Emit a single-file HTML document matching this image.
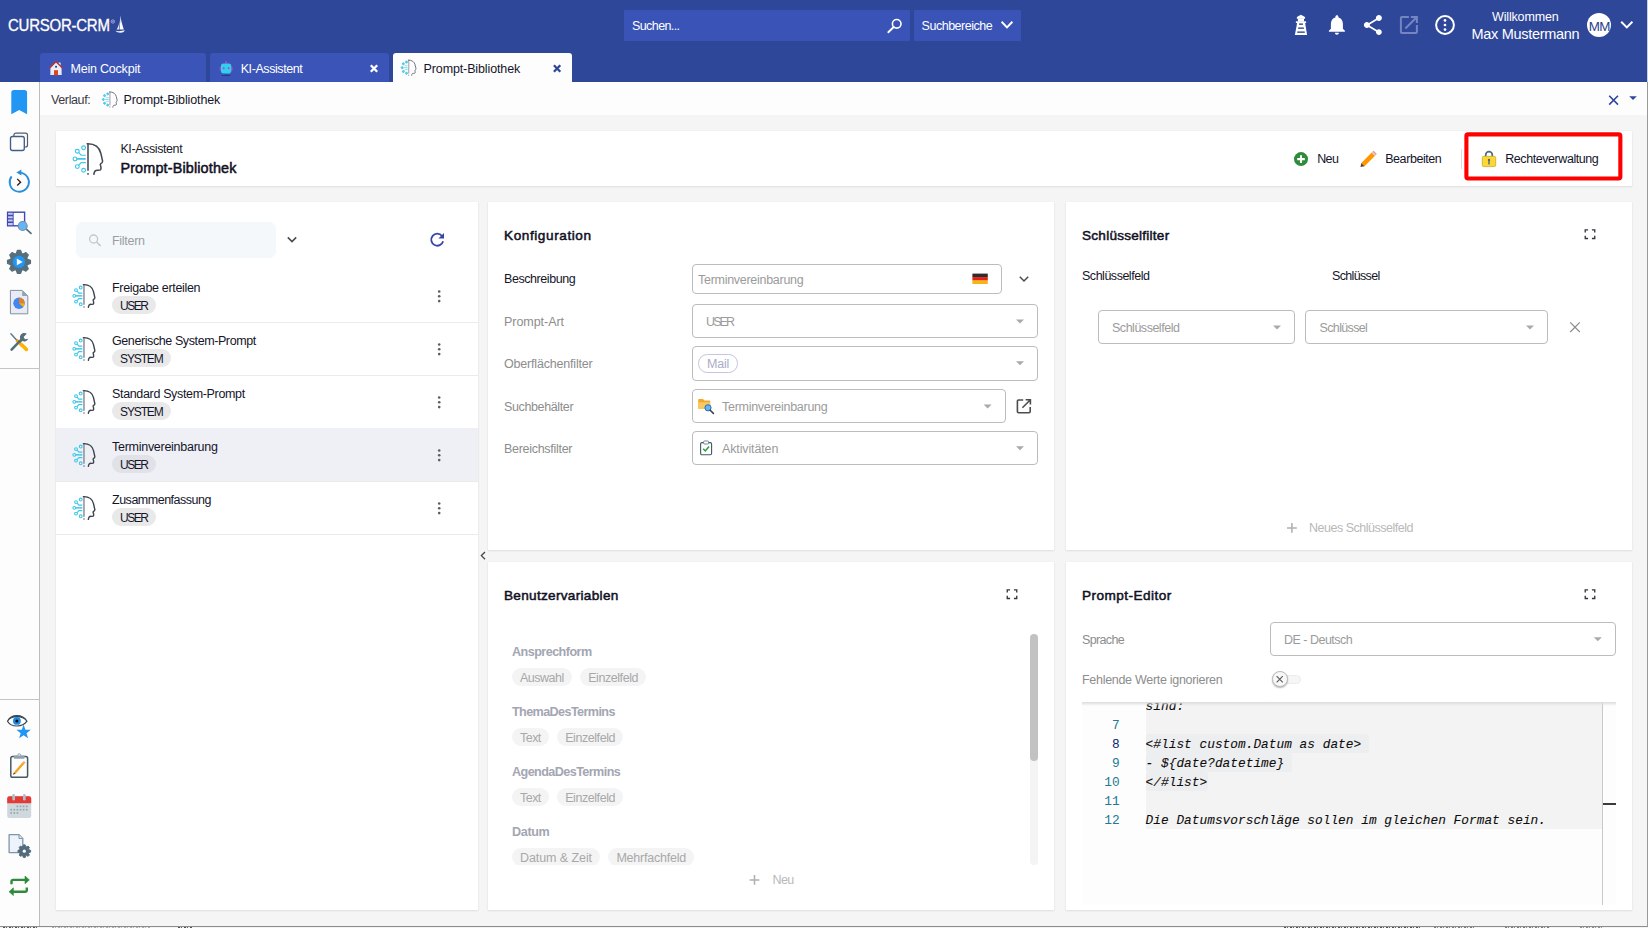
<!DOCTYPE html>
<html lang="de">
<head>
<meta charset="utf-8">
<title>CURSOR-CRM – Prompt-Bibliothek</title>
<style>
*{box-sizing:border-box;margin:0;padding:0}
html,body{width:1648px;height:928px;overflow:hidden;background:#f5f5f5;font-family:"Liberation Sans",sans-serif;font-size:12.5px;color:#1b1b2b}
.abs{position:absolute}
.t{position:absolute;white-space:nowrap;line-height:1}
svg{overflow:visible}
#hdr{left:0;top:0;width:1648px;height:82px;background:#2f4799}
#side{left:0;top:82px;width:40px;height:845px;background:#fdfdfd;border-right:1px solid #bdbdbd}
#crumb{left:40px;top:82px;width:1608px;height:33px;background:#fdfdfd}
</style>
</head>
<body>
<div id="hdr" class="abs"></div>
<div id="side" class="abs"></div>
<div id="crumb" class="abs"></div>
<div class="t" style="left:8.30px;top:16.00px;font-size:16.20px;color:#fff;letter-spacing:-0.290px;line-height:18px;-webkit-text-stroke:.3px #fff;transform:scaleX(.928);transform-origin:0 0;">CURSOR-CRM</div>
<svg class="abs" style="left:110px;top:19px;" width="4.60" height="4.60" viewBox="-1.304 -0.435 10.000 10.000"><circle cx="5" cy="5" r="3.6" fill="none" stroke="#dfe4f5" stroke-width="1.3"/><circle cx="5" cy="5" r="1.2" fill="#dfe4f5"/></svg>
<svg class="abs" style="left:115px;top:15px;" width="10.00" height="18.30" viewBox="0.000 0.000 21.000 37.000"><path d="M11 0 C12 9 15.5 20 18.5 30 H9.5 C11 20 11.2 9 11 0Z" fill="#fff"/><path d="M9.6 9 C9.2 17 7.5 24 3.5 30 H8.4 C9.6 23 9.9 16 9.6 9Z" fill="#e4e9f8"/><path d="M1 32.5 C6 33.6 14 33.4 20.5 31.5 C19.5 34.5 17 36.2 12 36.4 C7 36.5 3 35.4 1 32.5Z" fill="#f2f4fc"/></svg>
<div class="abs" style="left:624.00px;top:10.00px;width:286.00px;height:30.50px;background:#3953b6;border-radius:1px;"></div>
<div class="t" style="left:632.00px;top:19.00px;font-size:12.50px;color:#fff;letter-spacing:-0.590px;line-height:14px;">Suchen...</div>
<svg class="abs" style="left:886px;top:17px;" width="17.00" height="16.00" viewBox="-0.500 -0.600 17.000 16.000"><circle cx="10.2" cy="6.2" r="4.3" fill="none" stroke="#fff" stroke-width="1.6"/><path d="M7.2 9.4 L1.8 14.6" stroke="#fff" stroke-width="1.9" stroke-linecap="round"/></svg>
<div class="abs" style="left:914.00px;top:10.00px;width:107.00px;height:30.50px;background:#3953b6;border-radius:1px;"></div>
<div class="t" style="left:921.60px;top:19.00px;font-size:12.50px;color:#fff;letter-spacing:-0.487px;line-height:14px;">Suchbereiche</div>
<svg class="abs" style="left:1000px;top:20px;" width="14.00" height="10.00" viewBox="0.000 0.000 14.000 10.000"><path d="M1.6 1.8 L7 7.4 L12.4 1.8" fill="none" stroke="#fff" stroke-width="2"/></svg>
<svg class="abs" style="left:1294px;top:14px;" width="14.00" height="20.40" viewBox="0.000 -0.800 14.000 20.400"><g fill="#fff"><path d="M6.9 0 L10.6 1.9 Q11.1 2.2 11.1 2.8 V3.4 Q11.1 4 10.5 4 H3.4 Q2.8 4 2.8 3.4 V2.8 Q2.8 2.2 3.3 1.9Z"/><rect x="3.9" y="3.6" width="6.1" height="3.2"/><rect x="1.8" y="6.4" width="10.4" height="1.9" rx=".7"/><path d="M3.2 8 H11.1 L13.1 20.3 H0.9Z"/></g><g fill="#1f2f86"><rect x="5" y="8.6" width="4" height="1.4" rx=".3"/><rect x="4.1" y="12.6" width="5.8" height="1.4" rx=".3"/><rect x="3.2" y="16.6" width="7.6" height="1.4" rx=".3"/></g></svg>
<svg class="abs" style="left:1324px;top:12px;" width="24.00" height="24.00" viewBox="-0.900 -0.700 24.000 24.000"><path fill="#fff" d="M12 22c1.1 0 2-.9 2-2h-4c0 1.1.89 2 2 2zm6-6v-5c0-3.07-1.64-5.64-4.5-6.32V4c0-.83-.67-1.5-1.5-1.5s-1.5.67-1.5 1.5v.68C7.63 5.36 6 7.92 6 11v5l-2 2v1h16v-1l-2-2z"/></svg>
<svg class="abs" style="left:1360px;top:13px;" width="24.00" height="24.00" viewBox="-0.900 -0.100 24.000 24.000"><path fill="#fff" d="M18 16.08c-.76 0-1.44.3-1.96.77L8.91 12.7c.05-.23.09-.46.09-.7s-.04-.47-.09-.7l7.05-4.11c.54.5 1.25.81 2.04.81 1.66 0 3-1.34 3-3s-1.34-3-3-3-3 1.34-3 3c0 .24.04.47.09.7L8.04 9.81C7.5 9.31 6.79 9 6 9c-1.66 0-3 1.34-3 3s1.34 3 3 3c.79 0 1.5-.31 2.04-.81l7.12 4.16c-.05.21-.08.43-.08.65 0 1.61 1.31 2.92 2.92 2.92 1.61 0 2.92-1.31 2.92-2.92s-1.31-2.92-2.92-2.92z"/></svg>
<svg class="abs" style="left:1396px;top:13px;" width="24.00" height="24.00" viewBox="-0.900 0.000 24.000 24.000"><path fill="#7584c2" d="M19 19H5V5h7V3H5c-1.11 0-2 .9-2 2v14c0 1.1.89 2 2 2h14c1.1 0 2-.9 2-2v-7h-2v7zM14 3v2h3.59l-9.83 9.83 1.41 1.41L19 6.41V10h2V3h-7z"/></svg>
<svg class="abs" style="left:1433px;top:13px;" width="24.00" height="24.00" viewBox="0.000 0.000 24.000 24.000"><circle cx="12" cy="12" r="8.9" fill="none" stroke="#fff" stroke-width="2"/><circle cx="12" cy="7.4" r="1.35" fill="#fff"/><circle cx="12" cy="12" r="1.35" fill="#fff"/><circle cx="12" cy="16.6" r="1.35" fill="#fff"/></svg>
<div class="t" style="left:1492.00px;top:10.00px;font-size:12.50px;color:#fff;letter-spacing:-0.156px;line-height:14px;">Willkommen</div>
<div class="t" style="left:1471.40px;top:26.00px;font-size:14.50px;color:#fff;letter-spacing:-0.286px;line-height:16px;">Max Mustermann</div>
<div class="abs" style="left:1586.60px;top:13.00px;width:24.40px;height:24.40px;background:#fff;border-radius:50%;"></div>
<div class="t" style="left:1588.80px;top:19.00px;font-size:13.40px;color:#2b3f8c;letter-spacing:-0.654px;line-height:15px;">MM</div>
<svg class="abs" style="left:1619px;top:20px;" width="14.50" height="10.00" viewBox="-0.600 0.000 14.500 10.000"><path d="M1.6 1.8 L7.2 7.4 L12.8 1.8" fill="none" stroke="#fff" stroke-width="2"/></svg>
<div class="abs" style="left:40.00px;top:53.00px;width:166.00px;height:29.00px;background:#3a55b7;border-radius:3px 3px 0 0;"></div>
<svg class="abs" style="left:49px;top:60px;" width="14.00" height="15.00" viewBox="0.000 -0.600 14.000 15.000"><rect x="9.4" y="2" width="2.2" height="4" fill="#e9ebf6"/><path d="M1.4 7.2 L7 1.8 L12.6 7.2 V14.4 H1.4Z" fill="#ededf9"/><rect x="1.4" y="12.9" width="11.2" height="0.8" fill="#d9dbf0"/><path d="M0.4 7.6 L7 0.9 L13.6 7.6" fill="none" stroke="#b23b3a" stroke-width="1.5" stroke-linejoin="miter"/><rect x="5" y="9.6" width="4" height="4.9" fill="#e2470f"/><rect x="6.1" y="5.3" width="1.9" height="1.7" fill="#0d4e8c"/></svg>
<div class="t" style="left:70.60px;top:62.00px;font-size:12.50px;color:#fff;letter-spacing:-0.221px;line-height:14px;">Mein Cockpit</div>
<div class="abs" style="left:210.00px;top:53.00px;width:179.00px;height:29.00px;background:#3a55b7;border-radius:3px 3px 0 0;"></div>
<svg class="abs" style="left:219px;top:60px;" width="15.00" height="16.00" viewBox="0.000 -0.600 15.000 16.000"><rect x="6.1" y="0.4" width="1.9" height="2.6" rx=".5" fill="#b43fc6"/><rect x="0.4" y="6.2" width="2" height="4" rx="1" fill="#a53fc0"/><rect x="11.8" y="6.2" width="2" height="4" rx="1" fill="#a53fc0"/><rect x="1.9" y="3" width="10.4" height="9.8" rx="2.6" fill="#30d0ee"/><path d="M9 12.8 H10 C11.5 12.8 12.3 11.8 12.3 10.4 V9.5 C11.8 11.5 10.7 12.5 9 12.8Z" fill="#27b7c8"/><circle cx="4.7" cy="7.6" r=".95" fill="#c038c9"/><circle cx="9.7" cy="7.6" r=".95" fill="#c038c9"/><ellipse cx="7.1" cy="14.8" rx="4.8" ry=".55" fill="#243a86"/></svg>
<div class="t" style="left:240.70px;top:62.00px;font-size:12.50px;color:#fff;letter-spacing:-0.424px;line-height:14px;">KI-Assistent</div>
<svg class="abs" style="left:369px;top:64px;" width="9.00" height="9.00" viewBox="-0.500 0.000 9.000 9.000"><path d="M1.3 1.3 L7.7 7.7 M7.7 1.3 L1.3 7.7" stroke="#fff" stroke-width="2.3"/></svg>
<div class="abs" style="left:393.00px;top:53.00px;width:179.00px;height:29.00px;background:#fdfdfd;border-radius:3px 3px 0 0;"></div>
<svg class="abs" style="left:396px;top:56px;" width="24.00" height="23.00" viewBox="-1.400 -0.400 48.000 46.000"><g fill="#5fd3ef" stroke="#3cc6e9" stroke-width="2.0"><circle cx="19.6" cy="11.7" r="1.9"/><circle cx="13.3" cy="15.2" r="1.9"/><circle cx="11" cy="22.9" r="1.9"/><circle cx="13.3" cy="30.6" r="1.9"/><circle cx="19.6" cy="34.2" r="1.9"/></g><path d="M14.7 16.6 L17.2 19.2 H21.8 M14.7 29.2 L17.2 26.6 H21.8" fill="none" stroke="#8fe0f4" stroke-width="2.0"/><path d="M13 22.9 H21.8" stroke="#8fe0f4" stroke-width="2.4"/><path d="M24 7.3 V34.7" stroke="#b4b5b9" stroke-width="2.6" fill="none"/><rect x="23.1" y="37" width="1.8" height="1.8" fill="#6a6f79"/><path d="M23.2 7.8 C30.5 7.6 35.3 11.2 36.8 17.2 L38.6 25.2 C38.8 26.3 38.2 27 36.6 27.9 C36 28.4 36.3 29.3 36.7 30 C37.1 31 37 32.2 36.9 33.3 C36.8 34.4 35.5 34.4 34 34.3 C31.2 34 30.2 35.4 29.9 38.3" stroke="#5b606a" stroke-width="1.7" fill="none" stroke-linecap="round" stroke-linejoin="round"/></svg>
<div class="t" style="left:423.60px;top:62.00px;font-size:12.50px;color:#15152a;letter-spacing:-0.127px;line-height:14px;">Prompt-Bibliothek</div>
<svg class="abs" style="left:552px;top:64px;" width="9.00" height="9.00" viewBox="-0.600 0.000 9.000 9.000"><path d="M1.3 1.3 L7.7 7.7 M7.7 1.3 L1.3 7.7" stroke="#2f4799" stroke-width="2.3"/></svg>
<div class="t" style="left:51.00px;top:93.00px;font-size:12.50px;color:#3a3a45;letter-spacing:-0.374px;line-height:14px;">Verlauf:</div>
<svg class="abs" style="left:97px;top:88px;" width="24.00" height="23.00" viewBox="-1.800 0.000 48.000 46.000"><g fill="#5fd3ef" stroke="#3cc6e9" stroke-width="2.0"><circle cx="19.6" cy="11.7" r="1.9"/><circle cx="13.3" cy="15.2" r="1.9"/><circle cx="11" cy="22.9" r="1.9"/><circle cx="13.3" cy="30.6" r="1.9"/><circle cx="19.6" cy="34.2" r="1.9"/></g><path d="M14.7 16.6 L17.2 19.2 H21.8 M14.7 29.2 L17.2 26.6 H21.8" fill="none" stroke="#8fe0f4" stroke-width="2.0"/><path d="M13 22.9 H21.8" stroke="#8fe0f4" stroke-width="2.4"/><path d="M24 7.3 V34.7" stroke="#b4b5b9" stroke-width="2.6" fill="none"/><rect x="23.1" y="37" width="1.8" height="1.8" fill="#6a6f79"/><path d="M23.2 7.8 C30.5 7.6 35.3 11.2 36.8 17.2 L38.6 25.2 C38.8 26.3 38.2 27 36.6 27.9 C36 28.4 36.3 29.3 36.7 30 C37.1 31 37 32.2 36.9 33.3 C36.8 34.4 35.5 34.4 34 34.3 C31.2 34 30.2 35.4 29.9 38.3" stroke="#5b606a" stroke-width="1.7" fill="none" stroke-linecap="round" stroke-linejoin="round"/></svg>
<div class="t" style="left:123.60px;top:93.00px;font-size:12.50px;color:#15152a;letter-spacing:-0.121px;line-height:14px;">Prompt-Bibliothek</div>
<svg class="abs" style="left:1607px;top:94px;" width="12.00" height="12.00" viewBox="-0.600 -0.200 12.000 12.000"><path d="M1.6 1.6 L10.4 10.4 M10.4 1.6 L1.6 10.4" stroke="#2f4799" stroke-width="1.6"/></svg>
<svg class="abs" style="left:1628px;top:95px;" width="9.00" height="5.00" viewBox="-0.600 -0.800 9.000 5.000"><path d="M0.6 0.4 H8.2 L4.4 4.2Z" fill="#2f4799"/></svg>
<svg class="abs" style="left:11px;top:89px;" width="16.40" height="25.00" viewBox="0.000 -0.600 16.400 25.000"><path d="M0.3 3 Q0.3 0.3 3 0.3 H13.4 Q16.1 0.3 16.1 3 V24.6 L8.2 20.4 L0.3 24.6Z" fill="#2196f3"/></svg>
<svg class="abs" style="left:9px;top:132px;" width="19.00" height="19.00" viewBox="-0.600 -0.400 19.000 19.000"><rect x="4.3" y="0.8" width="13.6" height="13.8" rx="2" fill="#fdfdfd" stroke="#555c66" stroke-width="1.2"/><rect x="0.9" y="4.1" width="13.8" height="14" rx="2" fill="#fdfdfd" stroke="#3f5f8a" stroke-width="1.35"/></svg>
<svg class="abs" style="left:7px;top:169px;" width="24.00" height="25.00" viewBox="0.000 0.000 24.000 25.000"><path d="M13.2 3.6 A9.6 9.6 0 1 1 4.6 7.4" fill="none" stroke="#2b8fdb" stroke-width="1.9"/><path d="M9.4 3.4 L14.4 0.4 V6.6Z" fill="#2b8fdb"/><path d="M10.2 9.9 L13.6 13.2 L10.2 16.5" fill="none" stroke="#2a1a1a" stroke-width="1.3"/></svg>
<svg class="abs" style="left:6px;top:210px;" width="26.00" height="24.00" viewBox="-0.400 -0.600 26.000 24.000"><rect x="1.2" y="1.6" width="17" height="13.6" fill="#fdfdfd" stroke="#3f48b8" stroke-width="1.4"/><path d="M1.2 4.9 H6.6 M1.2 8.3 H6.6 M1.2 11.7 H6.6 M6.6 1.6 V15.2" stroke="#3f48b8" stroke-width="1.3"/><rect x="1.9" y="2.3" width="4.2" height="12.2" fill="#c5cae9"/><path d="M1.2 4.9 H6.6 M1.2 8.3 H6.6 M1.2 11.7 H6.6" stroke="#3f48b8" stroke-width="1.4"/><path d="M19.6 18.2 L24.6 22.8" stroke="#546e7a" stroke-width="1.7" stroke-linecap="round"/><circle cx="16.3" cy="15.4" r="4.5" fill="#64b5f6" stroke="#78909c" stroke-width="1.1"/></svg>
<svg class="abs" style="left:6px;top:249px;" width="25.00" height="25.00" viewBox="-0.500 -0.400 25.000 25.000"><path d="M10.87 1.02 L14.13 1.02 L15.17 4.11 L16.54 4.68 L19.46 3.22 L21.78 5.54 L20.32 8.46 L20.89 9.83 L23.98 10.87 L23.98 14.13 L20.89 15.17 L20.32 16.54 L21.78 19.46 L19.46 21.78 L16.54 20.32 L15.17 20.89 L14.13 23.98 L10.87 23.98 L9.83 20.89 L8.46 20.32 L5.54 21.78 L3.22 19.46 L4.68 16.54 L4.11 15.17 L1.02 14.13 L1.02 10.87 L4.11 9.83 L4.68 8.46 L3.22 5.54 L5.54 3.22 L8.46 4.68 L9.83 4.11Z" fill="#566f7c" stroke="#566f7c" stroke-width="1.2" stroke-linejoin="round"/><circle cx="12.5" cy="12.5" r="6.1" fill="#2196f3"/><path d="M10.3 9.1 L16.2 12.5 L10.3 15.9Z" fill="#fff"/></svg>
<svg class="abs" style="left:9px;top:289px;" width="19.00" height="25.00" viewBox="-0.600 -0.600 19.000 25.000"><path d="M0.8 0.8 H12.6 L18.2 6.4 V24.2 H0.8Z" fill="#e8eaf6" stroke="#7f93a0" stroke-width="1"/><path d="M12.6 0.8 L18.2 6.4 H12.6Z" fill="#90a4ae"/><circle cx="9.4" cy="13.6" r="5.7" fill="#4285f4"/><path d="M9.4 13.6 V7.9 A5.7 5.7 0 0 1 15.1 13.6Z" fill="#e67e22"/><path d="M9.4 13.6 H15.1 A5.7 5.7 0 0 1 13.6 17.5Z" fill="#f4b400"/></svg>
<svg class="abs" style="left:9px;top:332px;" width="20.00" height="20.00" viewBox="-0.400 -0.200 20.000 20.000"><path d="M1.5 1.6 L7.6 8.4" stroke="#607d8b" stroke-width="1.5" stroke-linecap="round"/><path d="M7.2 8 L13.2 13.8" stroke="#ffa000" stroke-width="3.2" stroke-linecap="butt"/><path d="M12.2 12.6 L17 17.2" stroke="#ffb300" stroke-width="3.6" stroke-linecap="round"/><path d="M2.2 17.4 L10.4 9" stroke="#546e7a" stroke-width="2.6" stroke-linecap="round"/><path d="M10.2 9.6 L13.6 6" stroke="#546e7a" stroke-width="2.8"/><path d="M17.4 1.6 A4.3 4.3 0 1 0 18.8 6.6 L15.6 7 L14.2 4.8 Z" fill="#546e7a"/></svg>
<div class="abs" style="left:0.00px;top:368.00px;width:40.00px;height:1.00px;background:#c4c4c4;"></div>
<div class="abs" style="left:0.00px;top:699.00px;width:40.00px;height:1.00px;background:#c4c4c4;"></div>
<svg class="abs" style="left:6px;top:713px;" width="25.00" height="25.00" viewBox="-0.600 -0.600 25.000 25.000"><path d="M0.9 7.6 C4.6 0.2 15.8 0.2 20.4 7.6 C15.8 14 4.6 14 0.9 7.6Z" fill="#fff" stroke="#37474f" stroke-width="1.2"/><path d="M0.9 7.6 C4.6 0.2 15.8 0.2 20.4 7.6 C15.6 2.4 5 2.4 0.9 7.6Z" fill="#37474f"/><circle cx="10.3" cy="7.3" r="3.9" fill="#1e88e5"/><circle cx="10.3" cy="7.3" r="1.5" fill="#0a0f1c"/><path d="M17.00 11.00 L18.82 16.09 L24.23 16.25 L19.95 19.56 L21.47 24.75 L17.00 21.70 L12.53 24.75 L14.05 19.56 L9.77 16.25 L15.18 16.09Z" fill="#2196f3"/></svg>
<svg class="abs" style="left:9px;top:753px;" width="20.00" height="25.00" viewBox="-0.200 -0.400 20.000 25.000"><rect x="1.6" y="3" width="16.8" height="20.9" rx="1.8" fill="#fdfdfd" stroke="#455a64" stroke-width="1.5"/><circle cx="10" cy="1.9" r="1.5" fill="#fdfdfd" stroke="#90a4ae" stroke-width="1"/><rect x="4.6" y="2.2" width="10.8" height="3.2" rx=".8" fill="#90a4ae"/><path d="M4.6 19 L13.6 8.6 L15.4 10.2 L6.4 20.4Z" fill="#f6a21b"/><path d="M4.6 19 L6.4 20.4 L3.7 21.3Z" fill="#5d4037"/><path d="M13.6 8.6 L14.6 7.5 L16.4 9.1 L15.4 10.2Z" fill="#ef9a9a"/></svg>
<svg class="abs" style="left:6px;top:793px;" width="25.00" height="25.00" viewBox="-0.800 -0.400 25.000 25.000"><rect x="0.4" y="2.8" width="24" height="21.8" rx="2.2" fill="#cfd8dc"/><path d="M0.4 9.8 V5 Q0.4 2.8 2.6 2.8 H22.2 Q24.4 2.8 24.4 5 V9.8Z" fill="#e53935"/><rect x="5.5" y="0.7" width="2.7" height="6.4" rx="1.35" fill="#b0bec5"/><rect x="16.2" y="0.7" width="2.7" height="6.4" rx="1.35" fill="#b0bec5"/><rect x="9.8" y="12.2" width="1.6" height="1.6" fill="#90a4ae"/><rect x="12.9" y="12.2" width="1.6" height="1.6" fill="#90a4ae"/><rect x="16.0" y="12.2" width="1.6" height="1.6" fill="#90a4ae"/><rect x="19.1" y="12.2" width="1.6" height="1.6" fill="#90a4ae"/><rect x="3.6" y="15.5" width="1.6" height="1.6" fill="#90a4ae"/><rect x="6.7" y="15.5" width="1.6" height="1.6" fill="#90a4ae"/><rect x="9.8" y="15.5" width="1.6" height="1.6" fill="#90a4ae"/><rect x="12.9" y="15.5" width="1.6" height="1.6" fill="#90a4ae"/><rect x="16.0" y="15.5" width="1.6" height="1.6" fill="#90a4ae"/><rect x="19.1" y="15.5" width="1.6" height="1.6" fill="#90a4ae"/><rect x="3.6" y="18.8" width="1.6" height="1.6" fill="#90a4ae"/><rect x="6.7" y="18.8" width="1.6" height="1.6" fill="#90a4ae"/><rect x="9.8" y="18.8" width="1.6" height="1.6" fill="#90a4ae"/></svg>
<svg class="abs" style="left:8px;top:833px;" width="24.00" height="26.00" viewBox="0.000 0.000 24.000 26.000"><path d="M1.1 1.7 H11 L14.8 5.5 V19.6 H1.1Z" fill="#eef2fa" stroke="#7e97a8" stroke-width="1.3" stroke-linejoin="round"/><path d="M11 1.7 V5.5 H14.8" fill="#dfe6ef" stroke="#7e97a8" stroke-width="1"/><path d="M15.40 11.86 L17.20 11.86 L17.78 13.53 L18.55 13.85 L20.14 13.08 L21.42 14.36 L20.65 15.95 L20.97 16.72 L22.64 17.30 L22.64 19.10 L20.97 19.68 L20.65 20.45 L21.42 22.04 L20.14 23.32 L18.55 22.55 L17.78 22.87 L17.20 24.54 L15.40 24.54 L14.82 22.87 L14.05 22.55 L12.46 23.32 L11.18 22.04 L11.95 20.45 L11.63 19.68 L9.96 19.10 L9.96 17.30 L11.63 16.72 L11.95 15.95 L11.18 14.36 L12.46 13.08 L14.05 13.85 L14.82 13.53Z" fill="#536c7a" stroke="#536c7a" stroke-width=".9" stroke-linejoin="round"/><circle cx="16.3" cy="18.2" r="1.6" fill="#fdfdfd"/></svg>
<svg class="abs" style="left:8px;top:875px;" width="23.00" height="22.00" viewBox="0.000 0.000 23.000 22.000"><path d="M3.5 9.2 V6.6 Q3.5 4.9 5.2 4.9 H17.4" fill="none" stroke="#2e8b3a" stroke-width="2.4"/><path d="M17 1 L21.4 4.9 L17 8.8Z" fill="#2e8b3a" stroke="#2e8b3a" stroke-width=".6" stroke-linejoin="round"/><path d="M18.8 12.6 V15 Q18.8 16.7 17.1 16.7 H5" fill="none" stroke="#2e8b3a" stroke-width="2.4"/><path d="M5.4 12.8 L1 16.7 L5.4 20.6Z" fill="#2e8b3a" stroke="#2e8b3a" stroke-width=".6" stroke-linejoin="round"/></svg>
<div class="abs" style="left:56.00px;top:131.00px;width:1576.00px;height:55.00px;background:#fff;box-shadow:0 1px 2px rgba(0,0,0,.09),0 0 1px rgba(0,0,0,.06);"></div>
<svg class="abs" style="left:64px;top:136px;" width="48.00" height="46.00" viewBox="0.000 0.000 48.000 46.000"><g fill="none" stroke="#3cc6e9" stroke-width="1.15"><circle cx="19.6" cy="11.7" r="1.9"/><circle cx="13.3" cy="15.2" r="1.9"/><circle cx="11" cy="22.9" r="1.9"/><circle cx="13.3" cy="30.6" r="1.9"/><circle cx="19.6" cy="34.2" r="1.9"/></g><path d="M14.7 16.6 L17.2 19.2 H21.8 M14.7 29.2 L17.2 26.6 H21.8" fill="none" stroke="#3cc6e9" stroke-width="1.15"/><path d="M13 22.9 H21.8" stroke="#3cc6e9" stroke-width="1.7"/><path d="M24 7.3 V34.7" stroke="#5d626d" stroke-width="1.8" fill="none"/><rect x="23.1" y="37" width="1.8" height="1.8" fill="#6a6f79"/><path d="M23.2 7.8 C30.5 7.6 35.3 11.2 36.8 17.2 L38.6 25.2 C38.8 26.3 38.2 27 36.6 27.9 C36 28.4 36.3 29.3 36.7 30 C37.1 31 37 32.2 36.9 33.3 C36.8 34.4 35.5 34.4 34 34.3 C31.2 34 30.2 35.4 29.9 38.3" stroke="#444a55" stroke-width="1.55" fill="none" stroke-linecap="round" stroke-linejoin="round"/></svg>
<div class="t" style="left:120.40px;top:142.00px;font-size:12.50px;color:#1b1b2b;letter-spacing:-0.407px;line-height:14px;">KI-Assistent</div>
<div class="t" style="left:120.40px;top:160.00px;font-size:14.40px;color:#10101f;letter-spacing:0.155px;-webkit-text-stroke:0.50px #10101f;line-height:16px;">Prompt-Bibliothek</div>
<svg class="abs" style="left:1293px;top:151px;" width="15.00" height="15.00" viewBox="-0.500 -0.600 15.000 15.000"><circle cx="7.5" cy="7.5" r="7" fill="#2e8b3a"/><path d="M7.5 3.7 V11.3 M3.7 7.5 H11.3" stroke="#fff" stroke-width="2.05"/></svg>
<div class="t" style="left:1317.20px;top:152.00px;font-size:12.50px;color:#15152a;letter-spacing:-0.644px;line-height:14px;">Neu</div>
<svg class="abs" style="left:1360px;top:150px;" width="18.00" height="17.00" viewBox="0.000 -0.300 18.000 17.000"><path d="M1.3 12.7 L12.5 1.5 L15.8 4.8 L4.6 16Z" fill="#ff9800"/><path d="M1.3 12.7 L4.6 16 L0.5 16.8Z" fill="#5d4037"/><path d="M12.5 1.5 L13.6 0.4 L16.9 3.7 L15.8 4.8Z" fill="#ef8f9a"/><path d="M11.6 2.4 L12.5 1.5 L15.8 4.8 L14.9 5.7Z" fill="#cfd8dc"/></svg>
<div class="t" style="left:1385.20px;top:152.00px;font-size:12.50px;color:#15152a;letter-spacing:-0.426px;line-height:14px;">Bearbeiten</div>
<div class="abs" style="left:1461.00px;top:149.00px;width:1.00px;height:20.00px;background:#dcdcdc;"></div>
<svg class="abs" style="left:1460px;top:130px;" width="166.00" height="54.00" viewBox="0.000 0.000 166.000 54.000"><rect x="6.4" y="4.4" width="153.95" height="44.05" rx="1.6" fill="none" stroke="#fe0000" stroke-width="4.1"/></svg>
<svg class="abs" style="left:1481px;top:150px;" width="16.00" height="17.00" viewBox="0.000 -0.400 16.000 17.000"><path d="M4.7 6.6 V4.6 A3.3 3.3 0 0 1 11.3 4.6 V6.6" fill="none" stroke="#4f6a80" stroke-width="1.7"/><rect x="1.3" y="5.9" width="13.4" height="10.3" rx="1.5" fill="#fdd835" stroke="#caa927" stroke-width=".8"/><circle cx="8" cy="9.6" r="1.2" fill="#4f6a80"/><rect x="7.3" y="9.8" width="1.4" height="4.4" rx=".4" fill="#4f6a80"/></svg>
<div class="t" style="left:1505.20px;top:152.00px;font-size:12.50px;color:#15152a;letter-spacing:-0.428px;line-height:14px;">Rechteverwaltung</div>
<div class="abs" style="left:56.00px;top:202.00px;width:422.00px;height:708.00px;background:#fff;box-shadow:0 1px 2px rgba(0,0,0,.09),0 0 1px rgba(0,0,0,.06);"></div>
<div class="abs" style="left:76.00px;top:222.00px;width:200.00px;height:35.50px;background:#f4f8fb;border-radius:7px;"></div>
<svg class="abs" style="left:88px;top:233px;" width="14.00" height="14.00" viewBox="0.000 -0.400 14.000 14.000"><circle cx="5.6" cy="5.6" r="4" fill="none" stroke="#c2c7cc" stroke-width="1.3"/><path d="M8.6 8.6 L12.6 12.6" stroke="#c2c7cc" stroke-width="1.5"/></svg>
<div class="t" style="left:112.00px;top:234.00px;font-size:12.50px;color:#9a9ea3;letter-spacing:-0.276px;line-height:14px;">Filtern</div>
<svg class="abs" style="left:286px;top:235px;" width="12.00" height="9.00" viewBox="0.000 -0.600 12.000 9.000"><path d="M1.8 1.8 L6 6 L10.2 1.8" fill="none" stroke="#4a4a4a" stroke-width="1.5"/></svg>
<svg class="abs" style="left:428px;top:231px;" width="17.00" height="17.00" viewBox="-0.400 -0.600 17.000 17.000"><path d="M13.6 4.4 A6 6 0 1 0 14.7 9.6" fill="none" stroke="#3645a8" stroke-width="1.8"/><path d="M15.6 1.4 V7 H10Z" fill="#3645a8"/></svg>
<div class="abs" style="left:56.00px;top:322.00px;width:422.00px;height:1.00px;background:#ebebeb;"></div>
<svg class="abs" style="left:66px;top:278px;" width="35.76" height="34.27" viewBox="-0.134 -1.074 48.000 46.000"><g fill="none" stroke="#3cc6e9" stroke-width="1.45"><circle cx="19.6" cy="11.7" r="1.9"/><circle cx="13.3" cy="15.2" r="1.9"/><circle cx="11" cy="22.9" r="1.9"/><circle cx="13.3" cy="30.6" r="1.9"/><circle cx="19.6" cy="34.2" r="1.9"/></g><path d="M14.7 16.6 L17.2 19.2 H21.8 M14.7 29.2 L17.2 26.6 H21.8" fill="none" stroke="#3cc6e9" stroke-width="1.45"/><path d="M13 22.9 H21.8" stroke="#3cc6e9" stroke-width="2.0"/><path d="M24 7.3 V34.7" stroke="#8b8e96" stroke-width="2.0" fill="none"/><rect x="23.1" y="37" width="1.8" height="1.8" fill="#6a6f79"/><path d="M23.2 7.8 C30.5 7.6 35.3 11.2 36.8 17.2 L38.6 25.2 C38.8 26.3 38.2 27 36.6 27.9 C36 28.4 36.3 29.3 36.7 30 C37.1 31 37 32.2 36.9 33.3 C36.8 34.4 35.5 34.4 34 34.3 C31.2 34 30.2 35.4 29.9 38.3" stroke="#3d434e" stroke-width="1.9" fill="none" stroke-linecap="round" stroke-linejoin="round"/></svg>
<div class="t" style="left:112.00px;top:281.00px;font-size:12.50px;color:#15152a;letter-spacing:-0.330px;line-height:14px;">Freigabe erteilen</div>
<div class="abs" style="left:112.00px;top:296.00px;width:43.60px;height:17.60px;background:#e9e9e9;border-radius:9px;"></div>
<div class="t" style="left:120.00px;top:299.00px;font-size:12.00px;color:#15152a;letter-spacing:-1.435px;line-height:14px;">USER</div>
<svg class="abs" style="left:436px;top:289px;" width="6.00" height="15.00" viewBox="0.000 0.000 6.000 15.000"><g fill="#5c5c5c"><circle cx="3.2" cy="2.5" r="1.3"/><circle cx="3.2" cy="7.3" r="1.3"/><circle cx="3.2" cy="12.1" r="1.3"/></g></svg>
<div class="abs" style="left:56.00px;top:375.00px;width:422.00px;height:1.00px;background:#ebebeb;"></div>
<svg class="abs" style="left:66px;top:331px;" width="35.76" height="34.27" viewBox="-0.134 -1.074 48.000 46.000"><g fill="none" stroke="#3cc6e9" stroke-width="1.45"><circle cx="19.6" cy="11.7" r="1.9"/><circle cx="13.3" cy="15.2" r="1.9"/><circle cx="11" cy="22.9" r="1.9"/><circle cx="13.3" cy="30.6" r="1.9"/><circle cx="19.6" cy="34.2" r="1.9"/></g><path d="M14.7 16.6 L17.2 19.2 H21.8 M14.7 29.2 L17.2 26.6 H21.8" fill="none" stroke="#3cc6e9" stroke-width="1.45"/><path d="M13 22.9 H21.8" stroke="#3cc6e9" stroke-width="2.0"/><path d="M24 7.3 V34.7" stroke="#8b8e96" stroke-width="2.0" fill="none"/><rect x="23.1" y="37" width="1.8" height="1.8" fill="#6a6f79"/><path d="M23.2 7.8 C30.5 7.6 35.3 11.2 36.8 17.2 L38.6 25.2 C38.8 26.3 38.2 27 36.6 27.9 C36 28.4 36.3 29.3 36.7 30 C37.1 31 37 32.2 36.9 33.3 C36.8 34.4 35.5 34.4 34 34.3 C31.2 34 30.2 35.4 29.9 38.3" stroke="#3d434e" stroke-width="1.9" fill="none" stroke-linecap="round" stroke-linejoin="round"/></svg>
<div class="t" style="left:112.00px;top:334.00px;font-size:12.50px;color:#15152a;letter-spacing:-0.405px;line-height:14px;">Generische System-Prompt</div>
<div class="abs" style="left:112.00px;top:349.00px;width:58.60px;height:17.60px;background:#e9e9e9;border-radius:9px;"></div>
<div class="t" style="left:120.00px;top:352.00px;font-size:12.00px;color:#15152a;letter-spacing:-1.124px;line-height:14px;">SYSTEM</div>
<svg class="abs" style="left:436px;top:342px;" width="6.00" height="15.00" viewBox="0.000 0.000 6.000 15.000"><g fill="#5c5c5c"><circle cx="3.2" cy="2.5" r="1.3"/><circle cx="3.2" cy="7.3" r="1.3"/><circle cx="3.2" cy="12.1" r="1.3"/></g></svg>
<div class="abs" style="left:56.00px;top:428.00px;width:422.00px;height:1.00px;background:#ebebeb;"></div>
<svg class="abs" style="left:66px;top:384px;" width="35.76" height="34.27" viewBox="-0.134 -1.074 48.000 46.000"><g fill="none" stroke="#3cc6e9" stroke-width="1.45"><circle cx="19.6" cy="11.7" r="1.9"/><circle cx="13.3" cy="15.2" r="1.9"/><circle cx="11" cy="22.9" r="1.9"/><circle cx="13.3" cy="30.6" r="1.9"/><circle cx="19.6" cy="34.2" r="1.9"/></g><path d="M14.7 16.6 L17.2 19.2 H21.8 M14.7 29.2 L17.2 26.6 H21.8" fill="none" stroke="#3cc6e9" stroke-width="1.45"/><path d="M13 22.9 H21.8" stroke="#3cc6e9" stroke-width="2.0"/><path d="M24 7.3 V34.7" stroke="#8b8e96" stroke-width="2.0" fill="none"/><rect x="23.1" y="37" width="1.8" height="1.8" fill="#6a6f79"/><path d="M23.2 7.8 C30.5 7.6 35.3 11.2 36.8 17.2 L38.6 25.2 C38.8 26.3 38.2 27 36.6 27.9 C36 28.4 36.3 29.3 36.7 30 C37.1 31 37 32.2 36.9 33.3 C36.8 34.4 35.5 34.4 34 34.3 C31.2 34 30.2 35.4 29.9 38.3" stroke="#3d434e" stroke-width="1.9" fill="none" stroke-linecap="round" stroke-linejoin="round"/></svg>
<div class="t" style="left:112.00px;top:387.00px;font-size:12.50px;color:#15152a;letter-spacing:-0.342px;line-height:14px;">Standard System-Prompt</div>
<div class="abs" style="left:112.00px;top:402.00px;width:58.60px;height:17.60px;background:#e9e9e9;border-radius:9px;"></div>
<div class="t" style="left:120.00px;top:405.00px;font-size:12.00px;color:#15152a;letter-spacing:-1.124px;line-height:14px;">SYSTEM</div>
<svg class="abs" style="left:436px;top:395px;" width="6.00" height="15.00" viewBox="0.000 0.000 6.000 15.000"><g fill="#5c5c5c"><circle cx="3.2" cy="2.5" r="1.3"/><circle cx="3.2" cy="7.3" r="1.3"/><circle cx="3.2" cy="12.1" r="1.3"/></g></svg>
<div class="abs" style="left:56.00px;top:428.00px;width:422.00px;height:53.00px;background:#eff0f6;"></div>
<div class="abs" style="left:56.00px;top:481.00px;width:422.00px;height:1.00px;background:#ebebeb;"></div>
<svg class="abs" style="left:66px;top:437px;" width="35.76" height="34.27" viewBox="-0.134 -1.074 48.000 46.000"><g fill="none" stroke="#3cc6e9" stroke-width="1.45"><circle cx="19.6" cy="11.7" r="1.9"/><circle cx="13.3" cy="15.2" r="1.9"/><circle cx="11" cy="22.9" r="1.9"/><circle cx="13.3" cy="30.6" r="1.9"/><circle cx="19.6" cy="34.2" r="1.9"/></g><path d="M14.7 16.6 L17.2 19.2 H21.8 M14.7 29.2 L17.2 26.6 H21.8" fill="none" stroke="#3cc6e9" stroke-width="1.45"/><path d="M13 22.9 H21.8" stroke="#3cc6e9" stroke-width="2.0"/><path d="M24 7.3 V34.7" stroke="#8b8e96" stroke-width="2.0" fill="none"/><rect x="23.1" y="37" width="1.8" height="1.8" fill="#6a6f79"/><path d="M23.2 7.8 C30.5 7.6 35.3 11.2 36.8 17.2 L38.6 25.2 C38.8 26.3 38.2 27 36.6 27.9 C36 28.4 36.3 29.3 36.7 30 C37.1 31 37 32.2 36.9 33.3 C36.8 34.4 35.5 34.4 34 34.3 C31.2 34 30.2 35.4 29.9 38.3" stroke="#3d434e" stroke-width="1.9" fill="none" stroke-linecap="round" stroke-linejoin="round"/></svg>
<div class="t" style="left:112.00px;top:440.00px;font-size:12.50px;color:#15152a;letter-spacing:-0.271px;line-height:14px;">Terminvereinbarung</div>
<div class="abs" style="left:112.00px;top:455.00px;width:43.60px;height:17.60px;background:#e1e2e7;border-radius:9px;"></div>
<div class="t" style="left:120.00px;top:458.00px;font-size:12.00px;color:#15152a;letter-spacing:-1.435px;line-height:14px;">USER</div>
<svg class="abs" style="left:436px;top:448px;" width="6.00" height="15.00" viewBox="0.000 0.000 6.000 15.000"><g fill="#5c5c5c"><circle cx="3.2" cy="2.5" r="1.3"/><circle cx="3.2" cy="7.3" r="1.3"/><circle cx="3.2" cy="12.1" r="1.3"/></g></svg>
<div class="abs" style="left:56.00px;top:534.00px;width:422.00px;height:1.00px;background:#ebebeb;"></div>
<svg class="abs" style="left:66px;top:490px;" width="35.76" height="34.27" viewBox="-0.134 -1.074 48.000 46.000"><g fill="none" stroke="#3cc6e9" stroke-width="1.45"><circle cx="19.6" cy="11.7" r="1.9"/><circle cx="13.3" cy="15.2" r="1.9"/><circle cx="11" cy="22.9" r="1.9"/><circle cx="13.3" cy="30.6" r="1.9"/><circle cx="19.6" cy="34.2" r="1.9"/></g><path d="M14.7 16.6 L17.2 19.2 H21.8 M14.7 29.2 L17.2 26.6 H21.8" fill="none" stroke="#3cc6e9" stroke-width="1.45"/><path d="M13 22.9 H21.8" stroke="#3cc6e9" stroke-width="2.0"/><path d="M24 7.3 V34.7" stroke="#8b8e96" stroke-width="2.0" fill="none"/><rect x="23.1" y="37" width="1.8" height="1.8" fill="#6a6f79"/><path d="M23.2 7.8 C30.5 7.6 35.3 11.2 36.8 17.2 L38.6 25.2 C38.8 26.3 38.2 27 36.6 27.9 C36 28.4 36.3 29.3 36.7 30 C37.1 31 37 32.2 36.9 33.3 C36.8 34.4 35.5 34.4 34 34.3 C31.2 34 30.2 35.4 29.9 38.3" stroke="#3d434e" stroke-width="1.9" fill="none" stroke-linecap="round" stroke-linejoin="round"/></svg>
<div class="t" style="left:112.00px;top:493.00px;font-size:12.50px;color:#15152a;letter-spacing:-0.487px;line-height:14px;">Zusammenfassung</div>
<div class="abs" style="left:112.00px;top:508.00px;width:43.60px;height:17.60px;background:#e9e9e9;border-radius:9px;"></div>
<div class="t" style="left:120.00px;top:511.00px;font-size:12.00px;color:#15152a;letter-spacing:-1.435px;line-height:14px;">USER</div>
<svg class="abs" style="left:436px;top:501px;" width="6.00" height="15.00" viewBox="0.000 0.000 6.000 15.000"><g fill="#5c5c5c"><circle cx="3.2" cy="2.5" r="1.3"/><circle cx="3.2" cy="7.3" r="1.3"/><circle cx="3.2" cy="12.1" r="1.3"/></g></svg>
<svg class="abs" style="left:479px;top:550px;" width="7.00" height="10.00" viewBox="-0.600 -0.600 7.000 10.000"><path d="M5.4 1.4 L1.8 5 L5.4 8.6" fill="none" stroke="#444" stroke-width="1.3"/></svg>
<div class="abs" style="left:488.00px;top:202.00px;width:566.00px;height:348.00px;background:#fff;box-shadow:0 1px 2px rgba(0,0,0,.09),0 0 1px rgba(0,0,0,.06);"></div>
<div class="t" style="left:504.00px;top:228.00px;font-size:13.60px;color:#10101f;letter-spacing:0.576px;-webkit-text-stroke:0.50px #10101f;line-height:15px;">Konfiguration</div>
<div class="t" style="left:504.00px;top:272.00px;font-size:12.50px;color:#15152a;letter-spacing:-0.437px;line-height:14px;">Beschreibung</div>
<div class="abs" style="left:692.00px;top:264.40px;width:310.00px;height:29.40px;background:#fff;border:1px solid #bcbcbc;border-radius:4px;"></div>
<div class="t" style="left:698.00px;top:273.00px;font-size:12.50px;color:#9b9b9b;letter-spacing:-0.282px;line-height:14px;">Terminvereinbarung</div>
<svg class="abs" style="left:972px;top:273px;" width="15.40" height="10.40" viewBox="-0.400 -0.600 15.400 10.400"><rect width="15.4" height="3.6" fill="#2d2d2d"/><rect y="3.5" width="15.4" height="3.5" fill="#e32219"/><rect y="6.9" width="15.4" height="3.5" fill="#f7b512"/></svg>
<svg class="abs" style="left:1018px;top:275px;" width="12.00" height="9.00" viewBox="0.000 0.000 12.000 9.000"><path d="M1.8 1.8 L6 6 L10.2 1.8" fill="none" stroke="#4a4a4a" stroke-width="1.5"/></svg>
<div class="t" style="left:504.00px;top:315.00px;font-size:12.50px;color:#8d8d8d;letter-spacing:-0.042px;line-height:14px;">Prompt-Art</div>
<div class="abs" style="left:692.00px;top:304.40px;width:346.00px;height:33.40px;background:#fff;border:1px solid #bcbcbc;border-radius:4px;"></div>
<div class="t" style="left:706.00px;top:315.00px;font-size:12.50px;color:#9b9b9b;letter-spacing:-1.882px;line-height:14px;">USER</div>
<svg class="abs" style="left:1016px;top:319px;" width="8.00" height="4.00" viewBox="0.000 -0.400 8.000 4.000"><path d="M0 0 H8 L4 4Z" fill="#aaaaaa"/></svg>
<div class="t" style="left:504.00px;top:357.00px;font-size:12.50px;color:#8d8d8d;letter-spacing:-0.183px;line-height:14px;">Oberflächenfilter</div>
<div class="abs" style="left:692.00px;top:346.00px;width:346.00px;height:35.00px;background:#fff;border:1px solid #bcbcbc;border-radius:4px;"></div>
<div class="abs" style="left:698.40px;top:354.40px;width:39.40px;height:18.60px;background:#fff;border:1px solid #c3c6e0;border-radius:9.3px;"></div>
<div class="t" style="left:707.00px;top:357.00px;font-size:12.50px;color:#a9acc8;letter-spacing:-0.180px;line-height:14px;">Mail</div>
<svg class="abs" style="left:1016px;top:361px;" width="8.00" height="4.00" viewBox="0.000 -0.200 8.000 4.000"><path d="M0 0 H8 L4 4Z" fill="#aaaaaa"/></svg>
<div class="t" style="left:504.00px;top:400.00px;font-size:12.50px;color:#8d8d8d;letter-spacing:-0.372px;line-height:14px;">Suchbehälter</div>
<div class="abs" style="left:692.00px;top:389.40px;width:313.60px;height:33.40px;background:#fff;border:1px solid #bcbcbc;border-radius:4px;"></div>
<svg class="abs" style="left:697px;top:398px;" width="17.00" height="16.00" viewBox="-0.600 -0.200 17.000 16.000"><path d="M0.6 1.6 Q0.6 0.8 1.4 0.8 H5.4 L6.8 2.4 H11.8 Q12.6 2.4 12.6 3.2 V10.6 H0.6Z" fill="#f0a92c"/><path d="M0.6 4 H12.6 V10 Q12.6 10.8 11.8 10.8 H1.4 Q0.6 10.8 0.6 10Z" fill="#f9c861"/><circle cx="10.4" cy="9.6" r="3.1" fill="#64b5f6" stroke="#2a6cb8" stroke-width="1"/><path d="M12.6 12 L15.8 15.2" stroke="#37474f" stroke-width="1.6" stroke-linecap="round"/></svg>
<div class="t" style="left:722.00px;top:400.00px;font-size:12.50px;color:#9b9b9b;letter-spacing:-0.282px;line-height:14px;">Terminvereinbarung</div>
<svg class="abs" style="left:983px;top:404px;" width="8.00" height="4.00" viewBox="-0.600 -0.400 8.000 4.000"><path d="M0 0 H8 L4 4Z" fill="#aaaaaa"/></svg>
<svg class="abs" style="left:1016px;top:398px;" width="16.00" height="16.00" viewBox="0.000 -0.400 16.000 16.000"><path d="M7.2 1.6 H2.6 Q1.4 1.6 1.4 2.8 V13.2 Q1.4 14.4 2.6 14.4 H13 Q14.2 14.4 14.2 13.2 V8.6" fill="none" stroke="#4d4d4d" stroke-width="1.6"/><path d="M9.6 1.4 H14.4 V6.2 M14.2 1.6 L6.4 9.4" fill="none" stroke="#4d4d4d" stroke-width="1.6"/></svg>
<div class="t" style="left:504.00px;top:442.00px;font-size:12.50px;color:#8d8d8d;letter-spacing:-0.289px;line-height:14px;">Bereichsfilter</div>
<div class="abs" style="left:692.00px;top:431.40px;width:346.00px;height:33.60px;background:#fff;border:1px solid #bcbcbc;border-radius:4px;"></div>
<svg class="abs" style="left:699px;top:440px;" width="12.60" height="15.60" viewBox="-0.889 -0.218 14.000 17.000"><rect x="0.9" y="2.6" width="12.2" height="13.4" rx="1.4" fill="#fff" stroke="#455a64" stroke-width="1.25"/><rect x="4.2" y="0.7" width="5.6" height="3.4" rx="1.2" fill="#fff" stroke="#607d8b" stroke-width="1"/><path d="M3.8 9.4 L6.1 11.8 L10.3 6.8" fill="none" stroke="#2e9b3e" stroke-width="1.7"/></svg>
<div class="t" style="left:722.00px;top:442.00px;font-size:12.50px;color:#9b9b9b;letter-spacing:-0.133px;line-height:14px;">Aktivitäten</div>
<svg class="abs" style="left:1016px;top:446px;" width="8.00" height="4.00" viewBox="0.000 -0.200 8.000 4.000"><path d="M0 0 H8 L4 4Z" fill="#aaaaaa"/></svg>
<div class="abs" style="left:1066.00px;top:202.00px;width:566.00px;height:348.00px;background:#fff;box-shadow:0 1px 2px rgba(0,0,0,.09),0 0 1px rgba(0,0,0,.06);"></div>
<div class="t" style="left:1082.00px;top:228.00px;font-size:13.60px;color:#10101f;letter-spacing:0.236px;-webkit-text-stroke:0.50px #10101f;line-height:15px;">Schlüsselfilter</div>
<svg class="abs" style="left:1584px;top:229px;" width="11.00" height="10.20" viewBox="-0.545 -0.108 12.000 11.000"><path d="M0.8 3.7 V0.8 H3.9 M8.1 0.8 H11.2 V3.7 M11.2 7.3 V10.2 H8.1 M3.9 10.2 H0.8 V7.3" fill="none" stroke="#34343d" stroke-width="1.45"/></svg>
<div class="t" style="left:1082.00px;top:269.00px;font-size:12.50px;color:#15152a;letter-spacing:-0.481px;line-height:14px;">Schlüsselfeld</div>
<div class="t" style="left:1332.00px;top:269.00px;font-size:12.50px;color:#15152a;letter-spacing:-0.655px;line-height:14px;">Schlüssel</div>
<div class="abs" style="left:1098.00px;top:310.00px;width:197.00px;height:33.60px;background:#fff;border:1px solid #bcbcbc;border-radius:4px;"></div>
<div class="t" style="left:1112.00px;top:321.00px;font-size:12.50px;color:#9b9b9b;letter-spacing:-0.481px;line-height:14px;">Schlüsselfeld</div>
<svg class="abs" style="left:1273px;top:325px;" width="8.00" height="4.00" viewBox="0.000 -0.400 8.000 4.000"><path d="M0 0 H8 L4 4Z" fill="#aaaaaa"/></svg>
<div class="abs" style="left:1305.00px;top:310.00px;width:243.00px;height:33.60px;background:#fff;border:1px solid #bcbcbc;border-radius:4px;"></div>
<div class="t" style="left:1319.60px;top:321.00px;font-size:12.50px;color:#9b9b9b;letter-spacing:-0.655px;line-height:14px;">Schlüssel</div>
<svg class="abs" style="left:1526px;top:325px;" width="8.00" height="4.00" viewBox="0.000 -0.400 8.000 4.000"><path d="M0 0 H8 L4 4Z" fill="#aaaaaa"/></svg>
<svg class="abs" style="left:1569px;top:321px;" width="12.00" height="12.00" viewBox="0.000 -0.200 12.000 12.000"><path d="M1.2 1.2 L10.8 10.8 M10.8 1.2 L1.2 10.8" stroke="#8c8c8c" stroke-width="1.2"/></svg>
<svg class="abs" style="left:1286px;top:522px;" width="11.00" height="11.00" viewBox="-0.400 -0.400 11.000 11.000"><path d="M5.5 0.6 V10.4 M0.6 5.5 H10.4" stroke="#b0b0b0" stroke-width="1.55"/></svg>
<div class="t" style="left:1309.00px;top:521.00px;font-size:12.50px;color:#b9b9b9;letter-spacing:-0.487px;line-height:14px;">Neues Schlüsselfeld</div>
<div class="abs" style="left:488.00px;top:562.00px;width:566.00px;height:348.00px;background:#fff;box-shadow:0 1px 2px rgba(0,0,0,.09),0 0 1px rgba(0,0,0,.06);"></div>
<div class="t" style="left:504.00px;top:588.00px;font-size:13.60px;color:#10101f;letter-spacing:0.296px;-webkit-text-stroke:0.50px #10101f;line-height:15px;">Benutzervariablen</div>
<svg class="abs" style="left:1006px;top:589px;" width="11.00" height="10.20" viewBox="-0.545 -0.108 12.000 11.000"><path d="M0.8 3.7 V0.8 H3.9 M8.1 0.8 H11.2 V3.7 M11.2 7.3 V10.2 H8.1 M3.9 10.2 H0.8 V7.3" fill="none" stroke="#34343d" stroke-width="1.45"/></svg>
<div class="abs" style="left:488px;top:634px;width:540px;height:231px;overflow:hidden"><div class="t" style="left:24.00px;top:11.00px;font-size:12.60px;color:#a3a6b2;font-weight:bold;letter-spacing:-0.539px;line-height:14px;">Ansprechform</div>
<div class="abs" style="left:24.00px;top:34.20px;width:59.80px;height:17.80px;background:#f4f4f4;border-radius:9px;"></div>
<div class="t" style="left:32.00px;top:37.00px;font-size:12.50px;color:#a8a8a8;letter-spacing:-0.492px;line-height:14px;">Auswahl</div>
<div class="abs" style="left:92.20px;top:34.20px;width:65.80px;height:17.80px;background:#f4f4f4;border-radius:9px;"></div>
<div class="t" style="left:100.20px;top:37.00px;font-size:12.50px;color:#a8a8a8;letter-spacing:-0.440px;line-height:14px;">Einzelfeld</div>
<div class="t" style="left:24.00px;top:71.00px;font-size:12.60px;color:#a3a6b2;font-weight:bold;letter-spacing:-0.597px;line-height:14px;">ThemaDesTermins</div>
<div class="abs" style="left:24.00px;top:94.20px;width:36.80px;height:17.80px;background:#f4f4f4;border-radius:9px;"></div>
<div class="t" style="left:32.00px;top:97.00px;font-size:12.50px;color:#a8a8a8;letter-spacing:-0.531px;line-height:14px;">Text</div>
<div class="abs" style="left:69.20px;top:94.20px;width:65.80px;height:17.80px;background:#f4f4f4;border-radius:9px;"></div>
<div class="t" style="left:77.20px;top:97.00px;font-size:12.50px;color:#a8a8a8;letter-spacing:-0.440px;line-height:14px;">Einzelfeld</div>
<div class="t" style="left:24.00px;top:131.00px;font-size:12.60px;color:#a3a6b2;font-weight:bold;letter-spacing:-0.571px;line-height:14px;">AgendaDesTermins</div>
<div class="abs" style="left:24.00px;top:154.20px;width:36.80px;height:17.80px;background:#f4f4f4;border-radius:9px;"></div>
<div class="t" style="left:32.00px;top:157.00px;font-size:12.50px;color:#a8a8a8;letter-spacing:-0.531px;line-height:14px;">Text</div>
<div class="abs" style="left:69.20px;top:154.20px;width:65.80px;height:17.80px;background:#f4f4f4;border-radius:9px;"></div>
<div class="t" style="left:77.20px;top:157.00px;font-size:12.50px;color:#a8a8a8;letter-spacing:-0.440px;line-height:14px;">Einzelfeld</div>
<div class="t" style="left:24.00px;top:191.00px;font-size:12.60px;color:#a3a6b2;font-weight:bold;letter-spacing:-0.357px;line-height:14px;">Datum</div>
<div class="abs" style="left:24.00px;top:214.20px;width:88.00px;height:17.80px;background:#f4f4f4;border-radius:9px;"></div>
<div class="t" style="left:32.00px;top:217.00px;font-size:12.50px;color:#a8a8a8;letter-spacing:-0.078px;line-height:14px;">Datum &amp; Zeit</div>
<div class="abs" style="left:120.40px;top:214.20px;width:85.60px;height:17.80px;background:#f4f4f4;border-radius:9px;"></div>
<div class="t" style="left:128.40px;top:217.00px;font-size:12.50px;color:#a8a8a8;letter-spacing:-0.222px;line-height:14px;">Mehrfachfeld</div>
</div>
<div class="abs" style="left:1030.00px;top:634.00px;width:8.00px;height:231.00px;background:#f4f4f4;border-radius:4px;"></div>
<div class="abs" style="left:1030.00px;top:634.00px;width:8.00px;height:127.00px;background:#c2c2c2;border-radius:4px;"></div>
<svg class="abs" style="left:749px;top:874px;" width="11.00" height="11.00" viewBox="0.000 -0.400 11.000 11.000"><path d="M5.5 0.6 V10.4 M0.6 5.5 H10.4" stroke="#b0b0b0" stroke-width="1.55"/></svg>
<div class="t" style="left:772.60px;top:873.00px;font-size:12.50px;color:#b9b9b9;letter-spacing:-0.644px;line-height:14px;">Neu</div>
<div class="abs" style="left:1066.00px;top:562.00px;width:566.00px;height:348.00px;background:#fff;box-shadow:0 1px 2px rgba(0,0,0,.09),0 0 1px rgba(0,0,0,.06);"></div>
<div class="t" style="left:1082.00px;top:588.00px;font-size:13.60px;color:#10101f;letter-spacing:0.458px;-webkit-text-stroke:0.50px #10101f;line-height:15px;">Prompt-Editor</div>
<svg class="abs" style="left:1584px;top:589px;" width="11.00" height="10.20" viewBox="-0.545 -0.108 12.000 11.000"><path d="M0.8 3.7 V0.8 H3.9 M8.1 0.8 H11.2 V3.7 M11.2 7.3 V10.2 H8.1 M3.9 10.2 H0.8 V7.3" fill="none" stroke="#34343d" stroke-width="1.45"/></svg>
<div class="t" style="left:1082.00px;top:633.00px;font-size:12.50px;color:#8d8d8d;letter-spacing:-0.651px;line-height:14px;">Sprache</div>
<div class="abs" style="left:1270.00px;top:622.40px;width:346.00px;height:33.40px;background:#fff;border:1px solid #bcbcbc;border-radius:4px;"></div>
<div class="t" style="left:1284.00px;top:633.00px;font-size:12.50px;color:#9b9b9b;letter-spacing:-0.511px;line-height:14px;">DE - Deutsch</div>
<svg class="abs" style="left:1593px;top:637px;" width="8.00" height="4.00" viewBox="-0.800 -0.200 8.000 4.000"><path d="M0 0 H8 L4 4Z" fill="#aaaaaa"/></svg>
<div class="t" style="left:1082.00px;top:673.00px;font-size:12.50px;color:#8d8d8d;letter-spacing:-0.295px;line-height:14px;">Fehlende Werte ignorieren</div>
<div class="abs" style="left:1282.00px;top:674.80px;width:19.40px;height:9.00px;background:#f6f6f6;border-radius:5px;border:1px solid #ececec;"></div>
<div class="abs" style="left:1271.80px;top:671.40px;width:15.80px;height:15.80px;background:#f8f8f8;border-radius:50%;border:1px solid #b9b9b9;box-shadow:0 1px 1.5px rgba(0,0,0,.28);"></div>
<svg class="abs" style="left:1275px;top:675px;" width="8.20" height="8.20" viewBox="-0.585 -0.195 8.000 8.000"><path d="M1 1 L7 7 M7 1 L1 7" stroke="#5a5a5a" stroke-width="1.1"/></svg>
<div class="abs" style="left:1082px;top:702px;width:534px;height:203px;overflow:hidden"><div class="abs" style="left:0.00px;top:0.00px;width:534.00px;height:203.00px;background:#fdfdfd;"></div>
<div class="abs" style="left:63.60px;top:0.00px;width:456.40px;height:127.00px;background:#f3f3f4;"></div>
<div class="abs" style="left:63.60px;top:32.20px;width:223.40px;height:18.40px;background:#edeef0;border-radius:3px;"></div>
<div class="abs" style="left:63.60px;top:51.20px;width:146.40px;height:18.40px;background:#edeef0;border-radius:3px;"></div>
<div class="abs" style="left:63.60px;top:70.20px;width:62.40px;height:18.40px;background:#edeef0;border-radius:3px;"></div>
<div class="t" style="left:63.60px;top:-3.00px;font-size:12.80px;color:#0d0d0d;font-style:italic;font-family:'Liberation Mono',monospace;letter-spacing:0.021px;line-height:15px;-webkit-text-stroke:.08px #0d0d0d;">sind:</div>
<div class="t" style="right:496.40px;top:16.00px;font-size:12.80px;color:#237893;font-family:'Liberation Mono',monospace;line-height:15px;">7</div>
<div class="t" style="right:496.40px;top:35.00px;font-size:12.80px;color:#0b216f;font-family:'Liberation Mono',monospace;line-height:15px;">8</div>
<div class="t" style="left:63.60px;top:35.00px;font-size:12.80px;color:#0d0d0d;font-style:italic;font-family:'Liberation Mono',monospace;letter-spacing:0.021px;line-height:15px;-webkit-text-stroke:.08px #0d0d0d;">&lt;#list custom.Datum as date&gt;</div>
<div class="t" style="right:496.40px;top:54.00px;font-size:12.80px;color:#237893;font-family:'Liberation Mono',monospace;line-height:15px;">9</div>
<div class="t" style="left:63.60px;top:54.00px;font-size:12.80px;color:#0d0d0d;font-style:italic;font-family:'Liberation Mono',monospace;letter-spacing:0.021px;line-height:15px;-webkit-text-stroke:.08px #0d0d0d;">- ${date?datetime}</div>
<div class="t" style="right:496.40px;top:73.00px;font-size:12.80px;color:#237893;font-family:'Liberation Mono',monospace;line-height:15px;">10</div>
<div class="t" style="left:63.60px;top:73.00px;font-size:12.80px;color:#0d0d0d;font-style:italic;font-family:'Liberation Mono',monospace;letter-spacing:0.021px;line-height:15px;-webkit-text-stroke:.08px #0d0d0d;">&lt;/#list&gt;</div>
<div class="t" style="right:496.40px;top:92.00px;font-size:12.80px;color:#237893;font-family:'Liberation Mono',monospace;line-height:15px;">11</div>
<div class="t" style="right:496.40px;top:111.00px;font-size:12.80px;color:#237893;font-family:'Liberation Mono',monospace;line-height:15px;">12</div>
<div class="t" style="left:63.60px;top:111.00px;font-size:12.80px;color:#0d0d0d;font-style:italic;font-family:'Liberation Mono',monospace;letter-spacing:0.021px;line-height:15px;-webkit-text-stroke:.08px #0d0d0d;">Die Datumsvorschläge sollen im gleichen Format sein.</div>
<div class="abs" style="left:520.00px;top:0.00px;width:1.00px;height:203.00px;background:#c9c9c9;"></div>
<div class="abs" style="left:521.00px;top:100.60px;width:13.00px;height:2.00px;background:#3b3b3b;"></div>
<div class="abs" style="left:0.00px;top:0.00px;width:534.00px;height:4.00px;background:linear-gradient(#dcdcdc,rgba(220,220,220,0));"></div>
</div>
<div class="abs" style="left:0.00px;top:926.00px;width:1648.00px;height:1.00px;background:#8c8c8c;"></div>
<div class="abs" style="left:0.00px;top:927.00px;width:1648.00px;height:1.00px;background:#f3f3f3;"></div>
<div class="abs" style="left:1647.00px;top:0.00px;width:1.00px;height:82.00px;background:#cfcfd4;"></div>
<div class="abs" style="left:1647.00px;top:82.00px;width:1.00px;height:845.00px;background:#9a9a9a;"></div>
<div class="abs" style="left:3.00px;top:927.00px;width:35.00px;height:1.00px;background:repeating-linear-gradient(90deg,#2a2a2a 0 2px,#dcdcdc 2px 3px,#444 3px 4px,#eee 4px 6px);opacity:0.80;"></div>
<div class="abs" style="left:52.00px;top:927.00px;width:98.00px;height:1.00px;background:repeating-linear-gradient(90deg,#2a2a2a 0 2px,#dcdcdc 2px 3px,#444 3px 4px,#eee 4px 6px);opacity:0.35;"></div>
<div class="abs" style="left:178.00px;top:927.00px;width:14.00px;height:1.00px;background:repeating-linear-gradient(90deg,#2a2a2a 0 2px,#dcdcdc 2px 3px,#444 3px 4px,#eee 4px 6px);opacity:0.80;"></div>
<div class="abs" style="left:1284.00px;top:927.00px;width:136.00px;height:1.00px;background:repeating-linear-gradient(90deg,#2a2a2a 0 2px,#dcdcdc 2px 3px,#444 3px 4px,#eee 4px 6px);opacity:0.80;"></div>
<div class="abs" style="left:1434.00px;top:927.00px;width:41.00px;height:1.00px;background:repeating-linear-gradient(90deg,#2a2a2a 0 2px,#dcdcdc 2px 3px,#444 3px 4px,#eee 4px 6px);opacity:0.60;"></div>
<div class="abs" style="left:1505.00px;top:927.00px;width:45.00px;height:1.00px;background:repeating-linear-gradient(90deg,#2a2a2a 0 2px,#dcdcdc 2px 3px,#444 3px 4px,#eee 4px 6px);opacity:0.60;"></div>
<div class="abs" style="left:1580.00px;top:927.00px;width:24.00px;height:1.00px;background:repeating-linear-gradient(90deg,#2a2a2a 0 2px,#dcdcdc 2px 3px,#444 3px 4px,#eee 4px 6px);opacity:0.50;"></div>
</body>
</html>
